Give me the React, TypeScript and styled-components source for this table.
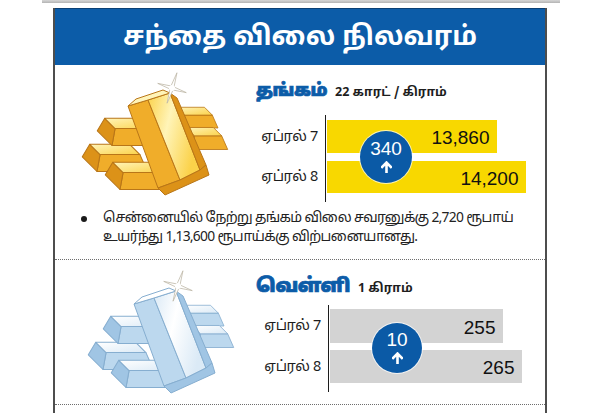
import React from 'react';
import styled, { createGlobalStyle } from 'styled-components';

const GlobalStyle = createGlobalStyle`
  html, body {
    margin: 0;
    padding: 0;
    background: #ffffff;
  }
  body {
    width: 600px;
    height: 413px;
    overflow: hidden;
    font-family: "Noto Sans Tamil", "Lohit Tamil", "Latha", "Noto Sans", "Liberation Sans", sans-serif;
  }
`;

type Palette = {
  id: string;
  hi: string;
  top: string;
  front: string;
  end: string;
  line: string;
};

const gold: Palette = {
  id: 'g',
  hi: '#fff4b8',
  top: '#fbd24a',
  front: '#f0ad2a',
  end: '#dc9218',
  line: '#b97618',
};

const silver: Palette = {
  id: 's',
  hi: '#ffffff',
  top: '#dbeaf6',
  front: '#bcd8ee',
  end: '#a0c5e4',
  line: '#86aed0',
};

type IngotProps = { x: number; y: number; s: number; p: Palette; L?: number };

// one small bar of the pile, seen from the front-left and above
const Ingot = ({ x, y, s, p, L = 60 }: IngotProps) => (
  <g transform={`translate(${x} ${y}) scale(${s})`} stroke={p.line} strokeWidth={1} strokeLinejoin="round">
    <polygon points={`0,30 ${L},30 ${L - 7.1},13.9 2.9,13.9`} fill={p.front} />
    <polygon points="0,30 2.9,13.9 -6.9,4.1 -14,16" fill={p.end} />
    <polygon points={`2.9,13.9 ${L - 7.1},13.9 ${L - 16.9},4.1 -6.9,4.1`} fill={`url(#${p.id}top)`} />
  </g>
);

const Bars = ({ p }: { p: Palette }) => (
  <svg width="156" height="124" viewBox="78 72 156 124">
    <defs>
      <linearGradient id={`${p.id}top`} x1="0" y1="0" x2="1" y2="1">
        <stop offset="0" stopColor={p.hi} />
        <stop offset="1" stopColor={p.top} />
      </linearGradient>
      <linearGradient id={`${p.id}lean`} x1="0" y1="0" x2="1" y2="0.4">
        <stop offset="0" stopColor={p.top} />
        <stop offset="0.45" stopColor={p.hi} />
        <stop offset="1" stopColor={p.top} />
      </linearGradient>
    </defs>
    <Ingot x={182} y={104} s={0.8} L={45} p={p} />
    <Ingot x={192} y={124} s={0.85} L={42} p={p} />
    <Ingot x={97} y={140} s={1.05} L={48} p={p} />
    <Ingot x={120} y={158} s={1.05} L={50} p={p} />
    <Ingot x={112} y={114} s={1.05} L={52} p={p} />
    <g stroke={p.line} strokeWidth={1} strokeLinejoin="round">
      <polygon points="128,106 148,100 180,180 158,188" fill={p.front} />
      <polygon points="148,100 170,93 200,170 180,180" fill={`url(#${p.id}lean)`} />
      <polygon points="170,93 177,98 206,165 200,170" fill={p.end} />
      <polygon points="158,188 180,180 200,170 206,165 209,175 165,195" fill={p.end} />
      <polygon points="128,106 136,99 163,90 170,93 148,100" fill={p.hi} />
    </g>
    <g transform="translate(172 88) rotate(18)">
      <path d="M0,-16 L1.6,-1.6 L15,0 L1.6,1.6 L0,16 L-1.6,1.6 L-15,0 L-1.6,-1.6 Z" fill="#ffffff" stroke="#bdb6a6" strokeWidth={0.7} />
      <circle r="3" fill="#ffffff" />
    </g>
  </svg>
);

const Arrow = () => (
  <svg width="11" height="12" viewBox="0 0 11 12">
    <path d="M5.5 11.5 V2 M1.2 6 L5.5 1.6 L9.8 6" fill="none" stroke="#ffffff" strokeWidth={2.6} strokeLinecap="square" />
  </svg>
);

const Page = styled.div`
  width: 600px;
  height: 413px;
  overflow: hidden;
`;

const TopRule = styled.div`
  margin-left: 42px;
  width: 518px;
  height: 3px;
  background: linear-gradient(#d6d6d6, #b4b4b4);
`;

const Card = styled.div`
  box-sizing: border-box;
  margin: 5px 0 0 53px;
  width: 494px;
  height: 405px;
  border-left: 2px solid #4d4d4d;
  border-right: 2px solid #4d4d4d;
`;

const Header = styled.div`
  height: 57px;
  background: #0c5ca8;
  border-top: 1px solid #0a3f74;
  box-sizing: border-box;
  display: flex;
  align-items: center;
  justify-content: center;
`;

const Title = styled.h1`
  margin: 0;
  color: #ffffff;
  font-size: 26.5px;
  font-weight: 700;
  line-height: 1;
  padding-top: 5px;
`;

const Section = styled.section<{ $h: number }>`
  height: ${(p) => p.$h}px;
  box-sizing: border-box;
  border-bottom: 1.5px dotted #6e6e6e;
`;

const Top = styled.div`
  display: flex;
`;

const Art = styled.div<{ $x: number; $y: number }>`
  width: 200px;
  flex: none;
  padding: ${(p) => p.$y}px 0 0 ${(p) => p.$x}px;
  box-sizing: border-box;
`;

const Info = styled.div<{ $pt: number }>`
  flex: 1;
  padding-top: ${(p) => p.$pt}px;
`;

const Heading = styled.div`
  display: flex;
  align-items: baseline;
  gap: 8px;
  height: 26px;
  padding-left: 1px;
`;

const Metal = styled.span<{ $size: number }>`
  color: #0c5ca8;
  font-size: ${(p) => p.$size}px;
  font-weight: 900;
  line-height: 26px;
  letter-spacing: -0.4px;
  -webkit-text-stroke: 0.7px #0c5ca8;
`;

const Unit = styled.span`
  color: #1e1e1e;
  font-size: 12.5px;
  font-weight: 700;
`;

const Chart = styled.div<{ $mt: number; $label: number }>`
  display: grid;
  grid-template-columns: ${(p) => p.$label}px auto;
  margin-top: ${(p) => p.$mt}px;
`;

const Labels = styled.div<{ $pt: number; $gap: number }>`
  display: flex;
  flex-direction: column;
  gap: ${(p) => p.$gap}px;
  padding-top: ${(p) => p.$pt}px;
`;

const Label = styled.div<{ $h: number }>`
  height: ${(p) => p.$h}px;
  display: flex;
  align-items: center;
  justify-content: flex-end;
  padding-right: 7px;
  font-size: 14.5px;
  color: #1c1c1c;
  letter-spacing: -0.3px;
`;

const Plot = styled.div<{ $pt: number; $pb: number; $gap: number }>`
  position: relative;
  display: flex;
  flex-direction: column;
  gap: ${(p) => p.$gap}px;
  padding: ${(p) => p.$pt}px 0 ${(p) => p.$pb}px;
  border-left: 1.5px solid #1c1c1c;
  padding-left: 0.5px;
`;

const Bar = styled.div<{ $w: number; $h: number; $c: string }>`
  width: ${(p) => p.$w}px;
  height: ${(p) => p.$h}px;
  background: ${(p) => p.$c};
  display: flex;
  align-items: center;
  justify-content: flex-end;
  padding-right: 7px;
  box-sizing: border-box;
  font-family: "Liberation Sans", Arial, sans-serif;
  font-size: 19px;
  color: #111111;
  padding-top: 3px;
`;

const Badge = styled.div<{ $x: number; $y: number; $d: number }>`
  position: absolute;
  left: ${(p) => p.$x}px;
  top: ${(p) => p.$y}px;
  width: ${(p) => p.$d}px;
  height: ${(p) => p.$d}px;
  border-radius: 50%;
  background: #0b5aa6;
  box-shadow: 0 0 0 1px rgba(255, 255, 255, 0.7);
  display: flex;
  flex-direction: column;
  align-items: center;
  justify-content: center;
  gap: 4px;
  color: #ffffff;
  font-family: "Liberation Sans", Arial, sans-serif;
  font-size: 19px;
  line-height: 16px;
`;

const Note = styled.div`
  display: flex;
  margin-top: 7px;
  padding-left: 26px;
  font-size: 13.8px;
  letter-spacing: -0.65px;
  line-height: 19px;
  color: #222222;
`;

const Dot = styled.span`
  flex: none;
  width: 6px;
  height: 6px;
  margin: 7px 16px 0 0;
  border-radius: 50%;
  background: #1a1a1a;
`;

const Footer = styled.div`
  height: 8px;
`;

type Row = { label: string; value: string; w: number; h: number };

type PriceProps = {
  name: string;
  nameSize: number;
  unit: string;
  color: string;
  rows: Row[];
  change: string;
  pt: number;
  mt: number;
  label: number;
  plotTop: number;
  plotBottom: number;
  gap: number;
  badge: { x: number; y: number; d: number };
};

const Prices = (props: PriceProps) => (
  <Info $pt={props.pt}>
    <Heading>
      <Metal $size={props.nameSize}>{props.name}</Metal>
      <Unit>{props.unit}</Unit>
    </Heading>
    <Chart $mt={props.mt} $label={props.label}>
      <Labels $pt={props.plotTop} $gap={props.gap}>
        {props.rows.map((r) => (
          <Label key={r.label} $h={r.h}>{r.label}</Label>
        ))}
      </Labels>
      <Plot $pt={props.plotTop} $pb={props.plotBottom} $gap={props.gap}>
        {props.rows.map((r) => (
          <Bar key={r.label} $w={r.w} $h={r.h} $c={props.color}>{r.value}</Bar>
        ))}
        <Badge $x={props.badge.x} $y={props.badge.y} $d={props.badge.d}>
          <span>{props.change}</span>
          <Arrow />
        </Badge>
      </Plot>
    </Chart>
  </Info>
);

export default function App() {
  return (
    <Page>
      <GlobalStyle />
      <TopRule />
      <Card>
        <Header>
          <Title>சந்தை விலை நிலவரம்</Title>
        </Header>

        <Section $h={195}>
          <Top>
            <Art $x={23} $y={7}>
              <Bars p={gold} />
            </Art>
            <Prices
              name="தங்கம்"
              nameSize={17.5}
              unit="22 காரட் / கிராம்"
              color="#f8d800"
              rows={[
                { label: 'ஏப்ரல் 7', value: '13,860', w: 170, h: 33 },
                { label: 'ஏப்ரல் 8', value: '14,200', w: 199, h: 32 },
              ]}
              change="340"
              pt={14}
              mt={10}
              label={70}
              plotTop={5}
              plotBottom={9}
              gap={8}
              badge={{ x: 34, y: 16, d: 52 }}
            />
          </Top>
          <Note>
            <Dot />
            <span>
              சென்னையில் நேற்று தங்கம் விலை சவரனுக்கு 2,720 ரூபாய்
              <br />
              உயர்ந்து 1,13,600 ரூபாய்க்கு விற்பனையானது.
            </span>
          </Note>
        </Section>

        <Section $h={145}>
          <Top>
            <Art $x={29} $y={10}>
              <Bars p={silver} />
            </Art>
            <Prices
              name="வெள்ளி"
              nameSize={19}
              unit="1 கிராம்"
              color="#d3d3d3"
              rows={[
                { label: 'ஏப்ரல் 7', value: '255', w: 173, h: 34 },
                { label: 'ஏப்ரல் 8', value: '265', w: 192, h: 33 },
              ]}
              change="10"
              pt={14}
              mt={5}
              label={73}
              plotTop={4}
              plotBottom={9}
              gap={7}
              badge={{ x: 43, y: 18, d: 50 }}
            />
          </Top>
        </Section>
        <Footer />
      </Card>
    </Page>
  );
}
